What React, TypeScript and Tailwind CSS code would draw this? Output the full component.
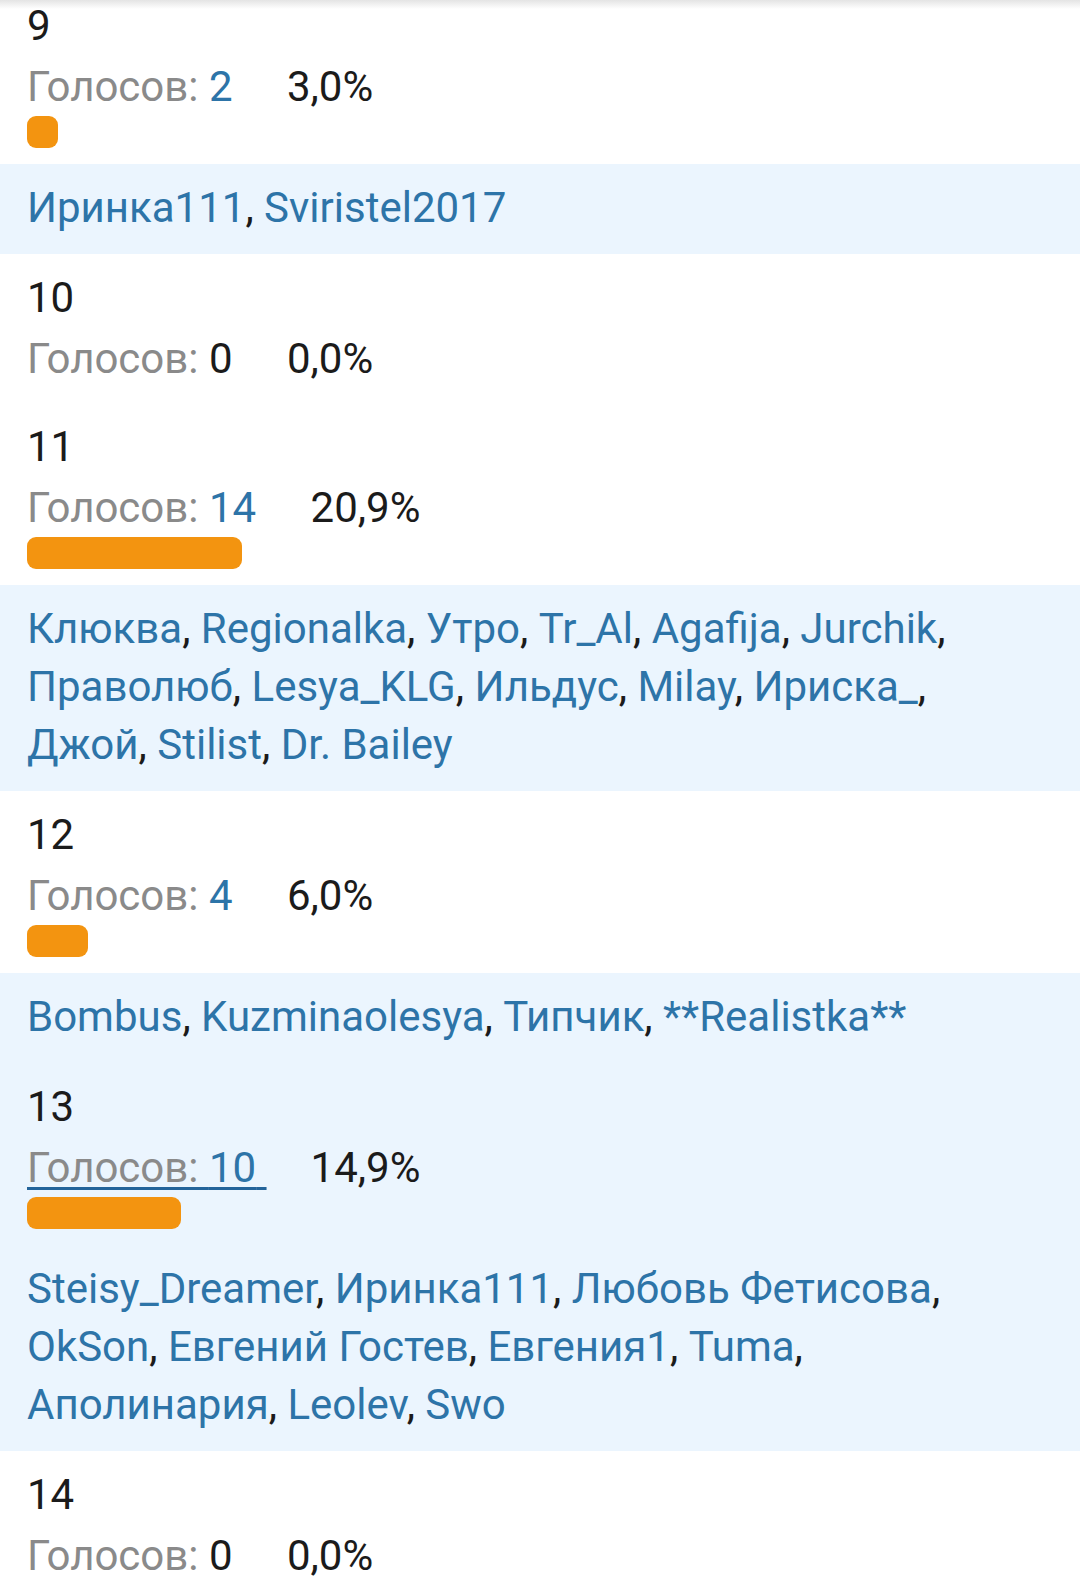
type Option = {
  id: number;
  votes: number;
  percent: string;
  bar: number;
  mine?: boolean;
  voters: string[];
};

const options: Option[] = [
  { id: 9, votes: 2, percent: '3,0%', bar: 31, voters: ['Иринка111', 'Sviristel2017'] },
  { id: 10, votes: 0, percent: '0,0%', bar: 0, voters: [] },
  {
    id: 11,
    votes: 14,
    percent: '20,9%',
    bar: 215,
    voters: [
      'Клюква', 'Regionalka', 'Утро', 'Tr_Al', 'Agafija', 'Jurchik',
      'Праволюб', 'Lesya_KLG', 'Ильдус', 'Milay', 'Ириска_',
      'Джой', 'Stilist', 'Dr. Bailey',
    ],
  },
  { id: 12, votes: 4, percent: '6,0%', bar: 61, voters: ['Bombus', 'Kuzminaolesya', 'Типчик', '**Realistka**'] },
  {
    id: 13,
    votes: 10,
    percent: '14,9%',
    bar: 154,
    mine: true,
    voters: [
      'Steisy_Dreamer', 'Иринка111', 'Любовь Фетисова',
      'OkSon', 'Евгений Гостев', 'Евгения1', 'Tuma',
      'Аполинария', 'Leolev', 'Swo',
    ],
  },
  { id: 14, votes: 0, percent: '0,0%', bar: 0, voters: [] },
];

function Voters({ names }: { names: string[] }) {
  return (
    <div className="bg-[#ebf5fe] pl-[27px] pr-[40px] pt-[15px] pb-[17px] leading-[58px]">
      {names.map((n, i) => (
        <span key={n}>
          <span className="text-[#2d74a8]">{n}</span>
          {i < names.length - 1 && <span className="text-[#1b1b1b]">, </span>}
        </span>
      ))}
    </div>
  );
}

function OptionRow({ opt, first }: { opt: Option; first: boolean }) {
  const countColor = opt.votes > 0 ? 'text-[#2d74a8]' : 'text-[#1b1b1b]';
  const bg = opt.mine ? 'bg-[#ebf5fe]' : 'bg-white';
  const pt = first ? 'pt-[2px]' : 'pt-[20px]';
  const pb = opt.bar > 0 ? 'pb-[16px]' : 'pb-[20px]';
  return (
    <div>
      <div className={`${bg} ${pt} ${pb} pl-[27px]`}>
        <div className="leading-[48px] text-[#1b1b1b]">{opt.id}</div>
        <div className="mt-[13px] flex leading-[48px]">
          <span
            className={
              opt.mine
                ? 'underline decoration-[#23649a] decoration-[3px] underline-offset-[5px]'
                : ''
            }
          >
            <span className="text-[#8a8a8a]">Голосов: </span>
            <span className={countColor}>{opt.votes}{'\u00a0'}</span>
          </span>
          <span className="ml-[44px] text-[#1b1b1b]">{opt.percent}</span>
        </div>
        {opt.bar > 0 && (
          <div className="mt-[5px] h-[32px] rounded-[9px] bg-[#f39410]" style={{ width: opt.bar }} />
        )}
      </div>
      {opt.voters.length > 0 && <Voters names={opt.voters} />}
    </div>
  );
}

export default function App() {
  return (
    <div className="relative w-[1080px] min-h-[1593px] bg-white font-['Roboto','Noto_Sans',sans-serif] text-[42px]">
      <div className="absolute left-0 right-0 top-0 h-[9px] bg-gradient-to-b from-[#e4e4e4] to-white/0" />
      {options.map((opt, i) => (
        <OptionRow key={opt.id} opt={opt} first={i === 0} />
      ))}
    </div>
  );
}
